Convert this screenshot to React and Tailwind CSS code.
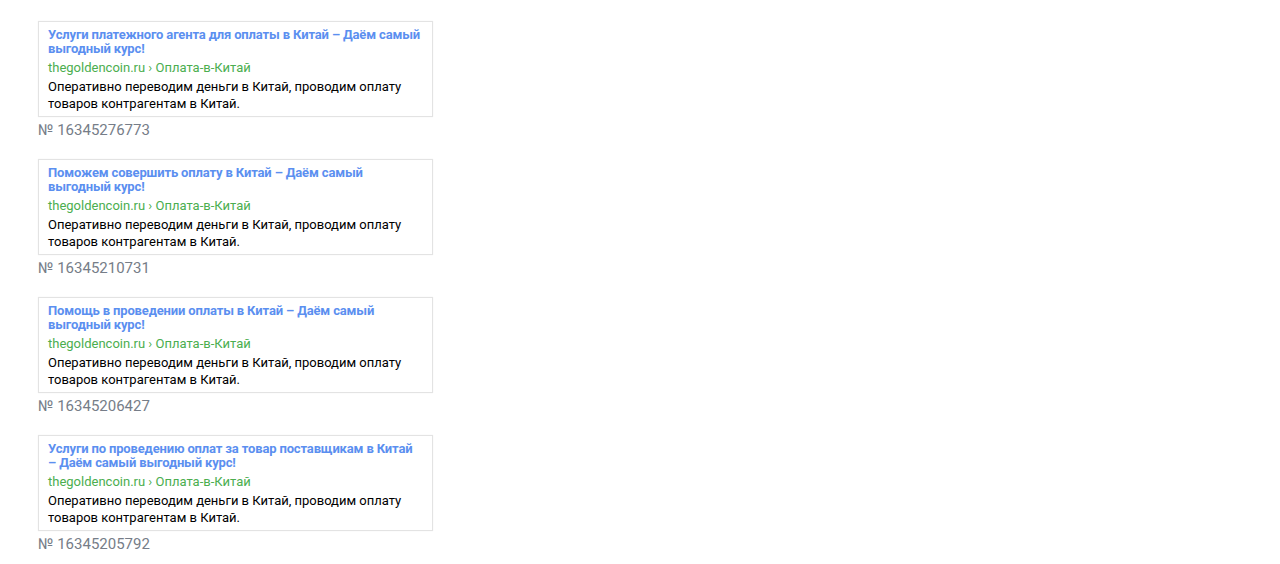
import React from "react"

const ads = [
  { lead: "Услуги платежного агента для оплаты в Китай", id: "16345276773" },
  { lead: "Поможем совершить оплату в Китай", id: "16345210731" },
  { lead: "Помощь в проведении оплаты в Китай", id: "16345206427" },
  { lead: "Услуги по проведению оплат за товар поставщикам в Китай", id: "16345205792" },
]

function AdCard({ lead, id }) {
  return (
    <div className="mb-[19px]">
      <div className="w-[395px] border border-[#e3e3e3] bg-white pt-[6px] pb-[4px] pl-[9px] pr-[5px] shadow-[0_0_1px_rgba(0,0,0,0.08)]">
        <div className="text-[13px] leading-[14px] font-bold tracking-[-0.15px] text-[#5b8ff0]">
          {lead} <span className="whitespace-nowrap">– Даём</span> самый выгодный курс!
        </div>
        <div className="mt-[3px] text-[13px] leading-[17px] text-[#4bae4f]">
          thegoldencoin.ru › Оплата-в-Китай
        </div>
        <div className="mt-[2px] text-[13px] leading-[17px] text-black">
          Оперативно переводим деньги в Китай, проводим оплату товаров контрагентам в Китай.
        </div>
      </div>
      <div className="mt-[3px] text-[15px] leading-[20px] text-[#767d88]">№ {id}</div>
    </div>
  )
}

export default function App() {
  return (
    <div
      className="min-h-[564px] bg-white pl-[38px] pt-[21px]"
      style={{ fontFamily: "Roboto, 'Noto Sans', sans-serif" }}>
      {ads.map((ad) => (
        <AdCard key={ad.id} {...ad} />
      ))}
    </div>
  )
}
